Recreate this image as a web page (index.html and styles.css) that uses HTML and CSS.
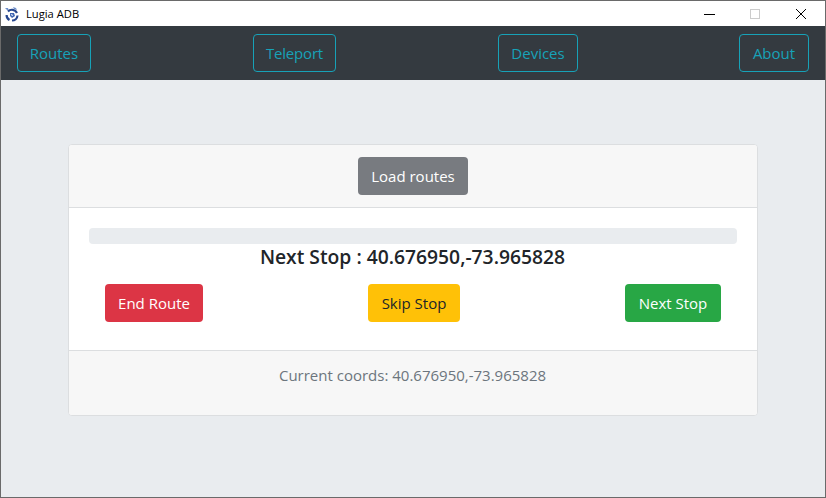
FILE: index.html
```html
<!DOCTYPE html>
<html lang="en">
<head>
<meta charset="utf-8">
<title>Lugia ADB</title>
<link rel="stylesheet" href="styles.css">
</head>
<body>
<div class="window">
  <header class="titlebar">
    <div class="title-left">
      <svg class="app-icon" width="16" height="16" viewBox="0 0 16 16"><path d="M1 2l3 0 1 3-2-1zM9 1l3 1 1 2-3-1z" fill="#6f8fca"/><path d="M4 5.5A5.5 5.5 0 0 1 13 7M13.5 9.5A5.5 5.5 0 0 1 8 14.5M5.5 14A5.5 5.5 0 0 1 2.600 9" fill="none" stroke="#27478f" stroke-width="2.200"/><path d="M6 7l4 0 1 3-3 2-2-2z" fill="#3f66b3"/><path d="M7 8.500l2 1" stroke="#e6ecf7" stroke-width="1.200"/></svg>
      <span class="title-text">Lugia ADB</span>
    </div>
    <div class="win-controls">
      <span class="win-btn"><svg width="12" height="12" viewBox="0 0 12 12"><path d="M1 6.5h11" stroke="#000"/></svg></span>
      <span class="win-btn"><svg width="12" height="12" viewBox="0 0 12 12"><rect x="1.5" y="1.5" width="9" height="9" fill="none" stroke="#ccc"/></svg></span>
      <span class="win-btn"><svg width="12" height="12" viewBox="0 0 12 12"><path d="M1 1l10 10M11 1L1 11" stroke="#000"/></svg></span>
    </div>
  </header>
  <nav class="navbar">
    <button class="nav-btn nav-routes">Routes</button>
    <button class="nav-btn nav-teleport">Teleport</button>
    <button class="nav-btn nav-devices">Devices</button>
    <button class="nav-btn nav-about">About</button>
  </nav>
  <main class="content">
    <section class="card">
      <div class="card-header"><button class="btn btn-gray">Load routes</button></div>
      <div class="card-body">
        <div class="progress"></div>
        <h5 class="next-stop">Next Stop : 40.676950,-73.965828</h5>
        <div class="actions">
          <button class="btn btn-red">End Route</button>
          <button class="btn btn-yellow">Skip Stop</button>
          <button class="btn btn-green">Next Stop</button>
        </div>
      </div>
      <div class="card-footer">Current coords: 40.676950,-73.965828</div>
    </section>
  </main>
</div>
</body>
</html>
```
FILE: styles.css
```css
* { box-sizing: border-box; }
html, body { margin: 0; padding: 0; height: 100%; }
body { font-family: "Open Sans", "Noto Sans", sans-serif; background: #e9ecef; overflow: hidden; }
.window { width: 826px; height: 498px; display: flex; flex-direction: column; border: 1px solid #6a6a6a; }
.titlebar { height: 25px; background: #fff; display: flex; justify-content: space-between; align-items: center; }
.title-left { display: flex; align-items: center; gap: 6px; padding-left: 3px; }
.app-icon { display: block; }
.title-text { font-size: 11.2px; color: #000; }
.win-controls { display: flex; margin-right: 1px; }
.win-btn { width: 46px; height: 25px; display: flex; align-items: center; justify-content: center; }
.navbar { height: 54px; background: #343a40; display: flex; align-items: center; padding: 0 16px; }
.nav-btn { height: 38px; padding: 0; border: 1px solid #17a2b8; border-radius: 4px; background: transparent; color: #17a2b8; font-family: inherit; font-size: 15px; }
.nav-routes { width: 74px; }
.nav-teleport { width: 83px; letter-spacing: -0.2px; margin-left: 162px; }
.nav-devices { width: 80px; margin-left: 162px; }
.nav-about { width: 70px; margin-left: auto; }
.content { flex: 1; display: flex; align-items: flex-start; justify-content: center; padding-top: 64px; padding-right: 1px; }
.card { width: 690px; height: 272px; background: #fff; border: 1px solid #dcdee0; border-radius: 4px; display: flex; flex-direction: column; overflow: hidden; }
.card-header { height: 63px; background: #f7f7f7; border-bottom: 1px solid #dcdee0; display: flex; align-items: center; justify-content: center; }
.card-body { flex: 1; padding: 20px 20px 0; }
.progress { height: 16px; background: #e9ecef; border-radius: 4px; }
.next-stop { margin: 0; text-align: center; font-size: 19.3px; font-weight: 600; line-height: 26px; color: #212529; }
.actions { display: flex; justify-content: space-between; padding: 0 16px; margin-top: 14px; }
.btn { height: 38px; padding: 0 0 0 1px; border: 0; border-radius: 4px; font-family: inherit; font-size: 15px; color: #fff; }
.btn-gray { background: #787b80; width: 110px; }
.btn-red { background: #dc3545; width: 98px; }
.btn-yellow { background: #ffc107; color: #212529; width: 92px; }
.btn-green { background: #28a745; width: 96px; }
.card-footer { height: 65px; background: #f7f7f7; border-top: 1px solid #dcdee0; color: #6c757d; font-size: 15px; text-align: center; padding-top: 12px; line-height: 24px; }
```
